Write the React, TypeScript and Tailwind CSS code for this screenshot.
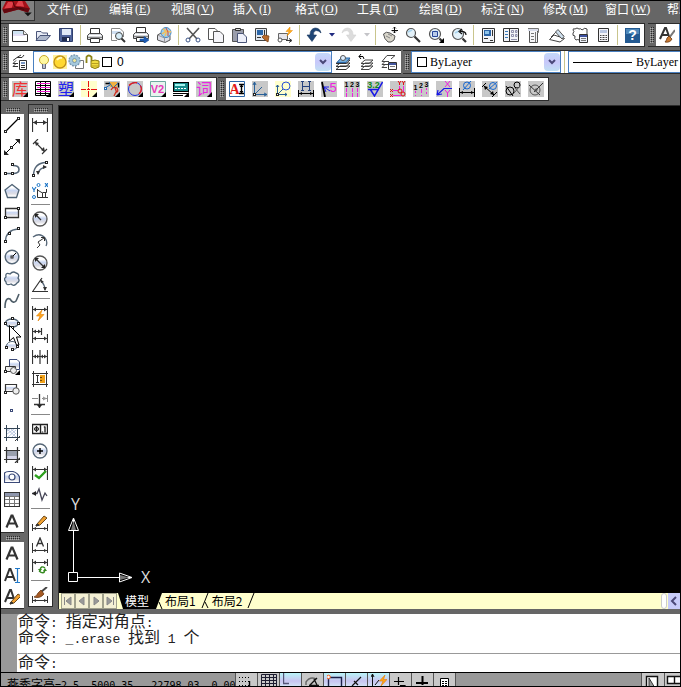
import React from "react";
import clsx from "clsx";

const SERIF = "font-['Liberation_Serif','Noto_Sans_CJK_SC',serif]";
const SANS = "font-['Noto_Sans_CJK_SC',sans-serif]";

type Tool = { name: string; icon: React.ReactNode; narrow?: boolean } | "sep";

/* ---------- drawing helpers, all icons use a 16x16 grid ---------- */

function P({ d, c = "#333", f = "none", w = 1 }: { d: string; c?: string; f?: string; w?: number }) {
  return <path d={d} stroke={c} fill={f} strokeWidth={w} />;
}

function R({ x = 0, y = 0, w = 16, h = 16, f = "#c8c8c8" }: { x?: number; y?: number; w?: number; h?: number; f?: string }) {
  return <rect x={x} y={y} width={w} height={h} fill={f} />;
}

function Node({ x, y, c = "#222" }: { x: number; y: number; c?: string }) {
  return <rect x={x - 1} y={y - 1} width={2} height={2} fill="#fff" stroke={c} />;
}

function T({ x, y, s, c, b, children }: { x: number; y: number; s: number; c: string; b?: boolean; children: React.ReactNode }) {
  return (
    <text x={x} y={y} fontSize={s} fill={c} fontWeight={b ? 700 : 400} textAnchor="middle">
      {children}
    </text>
  );
}

const Corner = () => <P d="M16 11V16H11Z" c="none" f="#000" />;

// horizontal dimension: two extension lines joined by an arrow line
function Dim({ y = 12, top = 7, c = "#333" }: { y?: number; top?: number; c?: string }) {
  return (
    <>
      <P d={`M.5 ${top}V16M15.5 ${top}V16M1 ${y}.5H15`} c={c} />
      <P d={`M1 ${y}.5L4 ${y - 1}V${y + 2}ZM15 ${y}.5L12 ${y - 1}V${y + 2}Z`} c="none" f={c} />
    </>
  );
}

function Glass({ x = 6, y = 6, r = 4.5 }: { x?: number; y?: number; r?: number }) {
  return (
    <>
      <circle cx={x} cy={y} r={r} fill="#e4f2fa" stroke="#555" strokeWidth={1.2} />
      <path d={`M${x - 3} ${y - 1}L${x + 1} ${y - 3}`} stroke="#a9d4ee" strokeWidth={1.5} />
      <path d={`M${x + r - 1} ${y + r - 1}L15 15`} stroke="#333" strokeWidth={2.2} />
    </>
  );
}

function Printer() {
  return (
    <>
      <P d="M3.5 7V1.5H12.5V7" f="#fff" />
      <P d="M.5 8.500L2.500 6.500H13.500L15.5 8.500V12.5H.5Z" f="#d6d8dc" c="#444" />
      <P d="M2 8.5H14" c="#fff" />
      <P d="M1 10.5H15" c="#888" />
      <P d="M3.5 11.5H12.5V15.5H3.5Z" f="#fff" />
    </>
  );
}

function Pencil() {
  return (
    <>
      <P d="M5 9L12 1L15 3L8 10L4 11Z" c="#6b4a1c" f="#f0a030" />
      <P d="M4 11L5 9L7 10Z" c="#333" f="#333" />
    </>
  );
}

function Bolt() {
  return <P d="M10 3L4.500 9H8L6 14L12 7.500H8.500Z" c="#e08000" f="#ffa51e" w={0.6} />;
}

function Brush() {
  return (
    <>
      <P d="M15 0L9 5" c="#444" w={2} />
      <P d="M9 3L12 7Q8 12 2 10Q5 9 6 6Z" c="#6b3a14" f="#a65a24" w={0.8} />
    </>
  );
}

const Shade = () => (
  <linearGradient id="shade" x1="0" y1="0" x2="0" y2="1">
    <stop offset="0.25" stopColor="#fff" />
    <stop offset="0.45" stopColor="#c9d6f2" />
    <stop offset="0.7" stopColor="#dcdce4" />
    <stop offset="0.9" stopColor="#fff" />
  </linearGradient>
);

/* ---------- toolbars ---------- */

const standardTools: Tool[] = [
  { name: "新建", icon: <><P d="M.5 3.500H11.500L15.500 7.500V14.500H.5Z" f="#fff" /><R x={1} y={4} w={10} h={3} f="#cfe3f2" /><R x={1} y={7} w={12} h={2} f="#e4e0f6" /><P d="M11.500 3.500V7.500H15.500" f="#eee" c="#666" /></> },
  { name: "打开", icon: <><P d="M1.500 13V4.500H6L7.500 6H12.500V8" c="#4a5578" f="#e8ecf6" /><P d="M1 13.500L5 8.500H15.500L11 13.500Z" c="#4a5578" f="#aeb8cc" /></> },
  { name: "保存", icon: <><P d="M1.500 1.500H14.500V14.500H2.500L1.500 13.500Z" c="#30406e" f="#4f639a" /><R x={4} y={2} w={9} h={6} f="#dfe8f6" /><R x={4} y={10} w={8} h={4} f="#1f2b50" /><R x={9} y={11} w={2} h={3} f="#fff" /></> },
  "sep",
  { name: "打印", icon: <Printer /> },
  { name: "打印预览", icon: <><P d="M1.500 13.500V1.500H10L13.500 5V10M1.500 13.500H7" f="#fff" c="#888" /><R x={2} y={4} w={9} h={3} f="#cfdff2" /><circle cx="9" cy="9" r="3.5" fill="#d6ecf8" stroke="#444" /><P d="M11.500 11.500L15 15" w={2} /></> },
  { name: "发布", icon: <><g transform="translate(0 -1)"><Printer /></g><P d="M7 12H11V9.500L16 13L11 16.500V14H7Z" c="#1550a0" f="#1e5cb4" w={0.6} /></> },
  { name: "三维 DWF", icon: <><P d="M1.500 8L6 5.500L14 8.500V13L9 15.500L1.500 13Z" c="#555" f="#dcdde6" /><P d="M1.500 8L8.500 11V15.500M8.500 11L14 8.500" c="#999" /><circle cx="10" cy="5.500" r="5" fill="#9ad0f2" stroke="#4b88bd" /><P d="M7 2Q12 4 9 9M6 7Q10 3 15 5" c="#f0c060" w={1.6} /><P d="M10 1Q13 5 12 9" c="#d84a3a" /></> },
  "sep",
  { name: "剪切", icon: <><P d="M2 1L12 12M14 1L4 12" c="#555" w={1.6} /><circle cx="3" cy="13" r="2" fill="none" stroke="#3b5488" /><circle cx="13" cy="13" r="2" fill="none" stroke="#3b5488" /></> },
  { name: "复制", icon: <><P d="M.5 1.500H7L9.500 4V12.500H.5Z" f="#fff" c="#555" /><P d="M5.500 4.500H12L15.500 8V15.500H5.500Z" f="#f6f6fa" c="#555" /></> },
  { name: "粘贴", icon: <><P d="M1.500 2.500H12.500V14.500H1.500Z" f="#9a9dab" c="#555" /><P d="M4.500 3.500V1.500H9.500V3.500Z" f="#ddd" /><P d="M6.500 6.500H12L15.500 10V15.500H6.500Z" f="#eef0fa" c="#4a5578" /></> },
  { name: "特性匹配", icon: <><P d="M1.500 1.500H12.500V13.500H1.500Z" f="#e0e6ee" c="#444" /><R x={3} y={3} w={6} h={5} f="#2c66a8" /><P d="M3 10.500H7M10.500 3V8" /><P d="M10 8L15 9L14 15L11 13L8 10Z" c="#7b451a" f="#b86a2c" w={0.8} /></> },
  { name: "块编辑器", icon: <><P d="M1.500 6.500H10.500V12.500H1.500Z" f="#e6e6ec" c="#666" /><circle cx="3" cy="13" r="2" fill="#fff" stroke="#555" /><P d="M9 13.500H14M12 11.500L15 13.500L12 15.500" /><P d="M13 0L9 4.500H12L10 9L15.500 3.500H13Z" c="#e88a00" f="#ffac20" w={0.5} /></> },
  "sep",
  { name: "放弃", icon: <P d="M15 6Q14 1 9 1Q4 2 4 8H1L6 14.500L10.500 8H7.500Q7 4 10 3.500Q13 3.500 15 6Z" c="#16345c" f="#1f4676" w={0.6} /> },
  { name: "放弃列表", narrow: true, icon: <P d="M5 6H11L8 9.500Z" c="none" f="#202a80" /> },
  { name: "重做", icon: <P d="M1 6Q2 1 7 1Q12 2 12 8H15L10 14.500L5.500 8H8.500Q9 4 6 3.500Q3 3.500 1 6Z" c="#d2d2d2" f="#dcdcdc" w={0.6} /> },
  { name: "重做列表", narrow: true, icon: <P d="M5 6H11L8 9.500Z" c="none" f="#c4c4c8" /> },
  "sep",
  { name: "实时平移", icon: <><P d="M1.500 7Q4 4 8 6L13 9Q13 14 9 15H6Q2 12 1.500 7Z" f="#d9d6cb" c="#555" /><P d="M4 9L8 11M6 7L10 9" c="#888" /><P d="M12.500 0V6M9.500 3.500H16" c="#111" /><P d="M11 1.500L12.500 0L14 1.500M11 4.500L12.500 6L14 4.500" c="#111" w={0.8} /></> },
  { name: "实时缩放", icon: <Glass /> },
  { name: "窗口缩放", icon: <><Glass x={7} y={7} r={5.5} /><P d="M4.500 4.500H9.500V9.500H4.500Z" c="#26479a" f="#b9cce8" /><Corner /></> },
  { name: "缩放上一个", icon: <><Glass x={7} y={7} r={5.5} /><P d="M15 8Q15 4 9 4.500M11 2L8 4.500L11 7" c="#111" w={1.2} /></> },
  "sep",
  { name: "特性", icon: <><P d="M2.500 1.500H14.500V15.500H2.500Z" f="#f2f4f8" /><R x={4} y={3} w={7} h={6} f="#2c66a8" /><R x={5} y={4} w={4} h={3} f="#8ec4ea" /><P d="M12.500 3V9M4 11.500H8M10 13.500H13" /></> },
  { name: "设计中心", icon: <><P d="M.5 1.500H15.500V14.500H.5ZM6.500 2V14" f="#f2f4f8" /><P d="M2 4.500H5M2 7.500H5M2 10.500H5" c="#3a7ab8" /><P d="M8.500 3.500H10.500V5.500H8.500ZM12.500 3.500H14V5.500H12.500ZM8.500 7.500H10.500V9.500H8.500ZM12.500 7.500H14V9.500H12.500ZM8 12.500H14" c="#779" w={0.8} /></> },
  { name: "工具选项板", icon: <><P d="M3.500 1.500H11.500V15.500H3.500Z" f="#f6f6f8" c="#555" /><R x={2} y={1} w={10} h={3} f="#d8dcea" /><P d="M2 1.500H12.500V5.500H11M5 6.500H8M5 9.500H8M5 12.500H8M9.500 5V15" c="#777" /></> },
  { name: "图纸集", icon: <><P d="M.5 12.500L5 8L15.500 11.500L11 15Z" f="#fff" c="#444" /><P d="M2 10L7 5L15 9" c="#555" /><P d="M6.500 5L9 2.500L15 9.500L13 12Z" f="#cfe0ee" c="#555" /></> },
  { name: "标记集", icon: <><P d="M1 3Q1 1 3 2Q5 0 7 2Q9 1 10 3Q13 0 15 2V6Q16 8 13 8M1 3Q3 5 1 6Q0 9 3 9Q2 12 4 13Q6 12 7 13" c="#444" /><P d="M7.500 7.500H15.500V15.500H7.500Z" f="#eef2fa" /><R x={8} y={8} w={7} h={2} f="#3c50a0" /><P d="M9 11.500H14M9 13.500H14" c="#777" /></> },
  { name: "快速计算器", icon: <><P d="M3.500 1.500H13.500V14.500H3.500Z" f="#f4f4f8" /><R x={5} y={3} w={7} h={3} f="#b8c6e2" /><P d="M5 8.500H12M5 10.500H12M5 12.500H12" c="#444" /><path d="M7 7V14M10 7V14" stroke="#f4f4f8" /></> },
  "sep",
  { name: "帮助", icon: <><R x={1} y={1} w={15} h={15} f="#235a92" /><R x={2} y={2} w={13} h={5} f="#4f88ba" /><T x={8.5} y={13} s={14} c="#fff" b>?</T></> },
];

const yanxiuTools: Tool[] = [
  { name: "图库", icon: <><R /><T x={8} y={14} s={16} c="#f03030">库</T><Corner /></> },
  { name: "表格", icon: <><R f="#fff" /><P d="M.5.5H15.500V14.500H.5ZM5.500 0V15M10.500 0V15M1 4.500H15M1 8.500H15M1 12.500H15" c="#000" /><P d="M2 2.500H15M2 6.500H15M2 10.500H15" c="#f020d0" /><Corner /></> },
  { name: "塑胶", icon: <><R /><T x={8} y={14} s={16} c="#2020f0">塑</T><Corner /></> },
  { name: "中心线", icon: <><R f="#ffffcc" /><P d="M7.500 0V6M7.500 7V9M7.500 10V16M0 8.500H5M6 8.500H9M10 8.500H16" c="#e81010" /><Corner /></> },
  { name: "标注编辑", icon: <><R /><P d="M1.500 2.500H14.500V6.500" c="#000" w={1.4} /><R x={6} y={1} w={7} h={5} f="#f0b040" /><P d="M1 7L6 4M5 1L9 7L14 2" c="#2468b0" /><Node x={1.5} y={7.5} c="#2468b0" /><P d="M7 9Q9 5 13 7Q15 11 12 11L10 15M11 7L13 12" c="#d03020" w={1.3} /><Corner /></> },
  { name: "圆", icon: <><R /><circle cx="8" cy="8" r="6.5" fill="none" stroke="#2030e0" /><P d="M2 4.500Q5 1 10 1.800M13.300 4.500Q16 9 12 13" c="#e02020" w={1.4} /><Corner /></> },
  { name: "V2", icon: <><R f="#e8f4ee" /><P d="M.5.5H15.500V15.500H.5Z" c="#70a8a0" /><T x={7.5} y={12} s={11} c="#e838b8" b>V2</T><Corner /></> },
  { name: "计算", icon: <><P d="M.5 1.500H15.500V10.500H.5Z" c="#000" f="#188c8c" w={1.2} /><R x={2} y={3} w={10} h={2} f="#a4f4ee" /><path d="M2 7.500H13" stroke="#fff" strokeDasharray="2 1" /><P d="M0 14.500H10M0 12.500H15" c="#000" /><Corner /></> },
  { name: "词库", icon: <><R /><T x={8} y={14} s={16} c="#e828e0">词</T><Corner /></> },
];

const labelTools: Tool[] = [
  { name: "文字高度", icon: <><R f="#fff" /><P d="M.5.5H15.500V15.500H.5Z" c="#2c66a8" /><g className="font-['Liberation_Serif',serif]"><T x={5.5} y={13} s={14} c="#e01818" b>A</T></g><P d="M10 3.500H15M10 12.500H15M12.500 4V12" c="#000" w={1.4} /><P d="M10.500 6L12.500 3.500L14.500 6ZM10.500 10L12.500 12.500L14.500 10Z" c="none" f="#000" /></> },
  { name: "坐标系", icon: <><R /><P d="M2.500 13V1M2.500 13.500H15M3 13L10 6M1 4L2.500 1L4 4M12 12L15 13.500L12 15" c="#286098" /><Node x={2.5} y={13.5} /></> },
  { name: "坐标对象", icon: <><R f="#ffffcc" /><P d="M2.500 13V4M2.500 13.500H12M3 13L8 8M1 6L2.500 4L4 6M10 12L12 13.500L10 15" c="#286098" /><circle cx="11" cy="5" r="4" fill="none" stroke="#2850d8" /><Node x={2.5} y={13.5} /></> },
  { name: "对齐标注", icon: <><R /><P d="M4.500 0V10M11.500 0V10M5 5.500H11M3 .5H6M10 .5H13M3 9.500H6M10 9.500H13" c="#24407c" /><Dim c="#000" top={9} /></> },
  { name: "角度引线", icon: <><R /><P d="M1 1L4 16" c="#000" w={1.8} /><P d="M3 6L9 10M3 6H8M3 6L5 11" c="#2020e8" /><T x={12} y={11} s={13} c="#f020e0">5</T></> },
  { name: "序号标注", icon: <><R /><T x={2.5} y={6} s={7} c="#000" b>1</T><T x={8} y={6} s={7} c="#000" b>2</T><T x={13.5} y={6} s={7} c="#000" b>3</T><P d="M2.500 7V11M2.500 12V16M8.500 7V11M8.500 12V16M13.500 7V11M13.500 12V16" c="#f020e0" /></> },
  { name: "粗糙度", icon: <><R /><T x={6.5} y={7} s={9} c="#108820" b>3.2</T><P d="M1 8.500H12M3 8L7.500 15L15.500 1" c="#1818e8" w={1.5} /></> },
  { name: "坐标标注", icon: <><R /><P d="M9.500 5V9M13.500 5V11M3 9.500H8M3 14.500H11" c="#f020e0" /><P d="M8 0L9.500 2L11 0M9.500 2V4M12 0L13.500 2L15 0M13.500 2V4" c="#e01010" /><P d="M0 8L3 11M3 8L0 11M0 13L3 16M3 13L0 16" c="#e01010" /><circle cx="13" cy="13" r="2" fill="none" stroke="#e01010" /><circle cx="10" cy="10" r="2" fill="none" stroke="#e01010" /></> },
  { name: "连续标注", icon: <><R /><T x={2.5} y={9} s={7} c="#000" b>1</T><T x={8} y={7} s={7} c="#000" b>2</T><T x={13.5} y={6} s={7} c="#000" b>3</T><P d="M2.500 10V12M2.500 14V15M8.500 8V12M8.500 14V15M13.500 7V9M13.500 11V13" c="#f020e0" /></> },
  { name: "引线坐标", icon: <><R /><P d="M1 14L8 7.500H16M1 14L2 9M1 14L6 13" c="#1818e8" w={1.2} /><P d="M9 0L14 6M14 0L9 6M9 9L11.500 12L14 9M11.500 12V16" c="#f020e0" /></> },
  { name: "直径线性", icon: <><R /><circle cx="8" cy="4.500" r="3.500" fill="none" stroke="#1868d0" /><P d="M4 9L12 0" c="#1868d0" /><Dim c="#000" y={11} top={7} /></> },
  { name: "直径对齐", icon: <><R /><circle cx="11" cy="5" r="3.500" fill="none" stroke="#1868d0" /><P d="M7 8L15 1" c="#1868d0" /><P d="M0 6L4 2M10 16L15 11M2 5L12 14" c="#000" /><P d="M2 5L3 9L6 6ZM12 14L11 10L8 13Z" c="none" f="#000" /></> },
  { name: "半径标注", icon: <><R /><circle cx="5" cy="10" r="4" fill="none" stroke="#000" /><P d="M1 5L8 15" c="#000" /><circle cx="12" cy="4" r="3" fill="none" stroke="#000" /><P d="M10 7L15 13M9 12L15 5" c="#555" /></> },
  { name: "直径标注", icon: <><R /><circle cx="7" cy="9" r="5" fill="none" stroke="#555" /><P d="M1 4L12 14M6 11L15 2" c="#333" /><P d="M6 11L8 7L10 9Z" c="none" f="#444" /></> },
];

const letterA = <P d="M2.500 14.500L7.500 2.500H8.500L13.500 14.500M5 10.500H11" w={2.2} />;

const drawTools: Tool[] = [
  { name: "直线", icon: <><P d="M2 14L14 2" c="#000" w={1.3} /><Node x={1.5} y={14.5} /><Node x={14.5} y={1.5} /></> },
  { name: "构造线", icon: <><P d="M2 14L14 2" c="#000" /><P d="M0 16V11L5 16ZM16 0V5L11 0Z" c="none" f="#222" /><Node x={7.5} y={8.5} /></> },
  { name: "多段线", icon: <><P d="M2 12.500H9Q15 12.500 15 8.500Q15 4.500 9 4.500" c="#567" w={1.6} /><Node x={1.5} y={12.5} /><Node x={8.5} y={12.5} /><Node x={8.5} y={3.5} /></> },
  { name: "正多边形", icon: <P d="M8 1.500L15 7L12.500 14.500H3.500L1 7Z" f="url(#shade)" c="#4e6274" w={1.3} /> },
  { name: "矩形", icon: <><P d="M1.500 3.500H14.500V12.500H1.500Z" f="url(#shade)" w={1.3} /><Node x={1.5} y={12.5} /><Node x={14.5} y={3.5} /></> },
  { name: "圆弧", icon: <><P d="M1.500 14Q2 3 14 2" c="#567" w={1.3} /><Node x={1.5} y={14.5} /><Node x={5.5} y={6.5} /><Node x={14.5} y={1.5} /></> },
  { name: "圆", icon: <><circle cx="8" cy="8" r="6.800" fill="url(#shade)" stroke="#567" strokeWidth="1.4" /><P d="M8 8L12 4" c="#000" /><Node x={8} y={8} /></> },
  { name: "修订云线", icon: <P d="M6 3Q9-.5 12 2Q16 3 14 7Q16.500 10 13 12Q10 16 7 13Q2 15 2 11Q-1 8 2 6Q1 1 6 3Z" f="url(#shade)" c="#4e6274" w={1.3} /> },
  { name: "样条曲线", icon: <P d="M1 15Q1 4 6 6Q9 11 12 8Q13 6 15 1" c="#4e5d68" w={1.6} /> },
  { name: "椭圆", icon: <><ellipse cx="8" cy="8" rx="6.500" ry="4" fill="url(#shade)" stroke="#4e6274" strokeWidth="1.300" /><Node x={8.5} y={3.5} /><Node x={1.5} y={8.5} /><Node x={14.5} y={8.5} /><Node x={8.5} y={12.5} /></> },
  { name: "椭圆弧", icon: <><P d="M2 9Q4 4 9 4.500Q15 6 14 10Q11 13 8 12.500" f="url(#shade)" c="#4e6274" /><Node x={8.5} y={12.5} /><Node x={2.5} y={10.5} /><Node x={13.5} y={9.5} /></> },
  { name: "插入块", icon: <><P d="M5.500 7V.5H13L15.500 3V10.500H12" f="url(#shade)" c="#3b4a78" /><P d="M1.500 7.500H11.500V12.500H1.500Z" f="#eee" /><circle cx="9.500" cy="11.500" r="3" fill="#eee" stroke="#555" /><Node x={1.5} y={12.5} /><Corner /></> },
  { name: "创建块", icon: <><P d="M1.500 3.500H12.500V10.500H1.500Z" f="url(#shade)" w={1.2} /><circle cx="12" cy="10" r="3.200" fill="#eee" stroke="#555" /><Node x={1.5} y={11.5} /></> },
  { name: "点", icon: <Node x={7.5} y={7.5} c="#3b4a78" /> },
  { name: "图案填充", icon: <><P d="M3 6L6 4M3 9L10 4M4 12L12 5M8 12L12 8M3 4L12 12M7 4L12 9" c="#a9bad8" w={0.8} /><P d="M2.500 0V16M13.500 0V16M0 3.500H16M0 12.500H16" c="#345" /><P d="M11 16L16 11" /></> },
  { name: "渐变色", icon: <><R x={3} y={4} w={10} h={8} f="#9aa0ae" /><R x={3} y={9} w={10} h={3} f="#d4d4e8" /><P d="M2.500 0V16M13.500 0V16M0 3.500H16M0 12.500H16M11 16L16 11" c="#333" w={1.2} /></> },
  { name: "面域", icon: <><P d="M.5 13.500V4Q2 2.500 5 2.500H9Q14 4 15.500 8V13.500Z" f="url(#shade)" c="#3b4a78" w={1.2} /><circle cx="8" cy="8" r="3" fill="#fff" stroke="#3b4a78" strokeWidth="1.200" /></> },
  { name: "表格", icon: <><P d="M.5 1.500H15.500V15.500H.5Z" f="#fff" w={1.2} /><R x={1} y={2} w={14} h={3} f="#8e96ac" /><P d="M1 5.500H15M1 8.500H15M1 12.500H15M5.500 5V15M10.500 5V15" c="#777" /></> },
  { name: "多行文字", icon: letterA },
];

const textTools: Tool[] = [
  { name: "多行文字", icon: letterA },
  { name: "单行文字", icon: <><P d="M1 14L5.500 2H6.500L11 14M3 10H9" w={2} /><P d="M11 1.500H16M11 15.500H16M13.500 2V15" c="#2078c8" w={1.2} /></> },
  { name: "编辑文字", icon: <><P d="M1 13L6 1H7L11 13M3 9H9" w={2} /><g transform="translate(2 4)"><Pencil /></g></> },
];

const dimensionTools: Tool[] = [
  { name: "线性标注", icon: <><P d="M.5 1V15M15.500 1V15M1 5.500H15" w={1.2} /><P d="M1 5.500L5 3V8ZM15 5.500L11 3V8Z" c="none" f="#333" /></> },
  { name: "对齐标注", icon: <><P d="M1 5L6 0M10 15L15 10M3 3L12 12" w={1.1} /><P d="M3 3L4 7L7 4ZM13 13L12 8L9 11Z" c="none" f="#333" /></> },
  { name: "弧长标注", icon: <><P d="M1.500 14Q2 2 14 1.500M6 13Q7 7 14 6" c="#567" w={1.4} /><P d="M6 14L4 10H8ZM15 6L11 4V8Z" c="none" f="#333" /><Node x={1.5} y={14.5} /><Node x={14.5} y={1.5} /></> },
  { name: "坐标标注", icon: <><P d="M5.500 6V14.500H16M10.500 14V10L5.500 7M10.500 9.500H14.500V6M13.500 14V10" c="#333" /><P d="M0 4L2 7L4 4M2 7V9M13 0L16 4M16 0L13 4" c="#2078c8" w={1.2} /><circle cx="6.500" cy="2" r="1.500" fill="none" stroke="#2078c8" /><circle cx="2" cy="14" r="1.500" fill="none" stroke="#2078c8" /></> },
  "sep",
  { name: "半径标注", icon: <><circle cx="8" cy="8" r="7" fill="url(#shade)" stroke="#555" strokeWidth="1.3" /><P d="M3 3L9 9" w={1.3} /><P d="M3 3H7L3 7Z" c="none" f="#222" /></> },
  { name: "折弯标注", icon: <><P d="M1 4Q8-1 13 5Q16 9 14 13" c="#567" w={1.3} /><P d="M5 15L8 12L6 9L12 5M9 4.500H12.500V8" c="#333" /></> },
  { name: "直径标注", icon: <><circle cx="8" cy="8" r="7" fill="url(#shade)" stroke="#555" strokeWidth="1.3" /><P d="M3 3L13 13" w={1.3} /><P d="M3 3H7L3 7ZM13 13H9L13 9Z" c="none" f="#222" /></> },
  { name: "角度标注", icon: <><P d="M0 14.500H16M1 14L10 1" w={1.2} /><P d="M9 4Q13 8 13 13" c="#567" w={1.3} /><P d="M8 2L12 5L9 6ZM13 14L11 10H15Z" c="none" f="#333" /></> },
  "sep",
  { name: "快速标注", icon: <><P d="M.5 1V15M15.500 1V15M1 4.500H15" w={1.2} /><P d="M1 4.500L4 2.500V6.500ZM15 4.500L12 2.500V6.500Z" c="none" f="#333" /><g transform="translate(0 2)"><Bolt /></g></> },
  { name: "基线标注", icon: <><P d="M.5 1V16M9.500 1V8M15.500 7V16M1 4.500H9M1 11.500H15" w={1.2} /><P d="M1 4.500L4 2.500V6.500ZM9 4.500L6 2.500V6.500ZM1 11.500L4 9.500V13.500ZM15 11.500L12 9.500V13.500Z" c="none" f="#333" /></> },
  { name: "连续标注", icon: <><P d="M.5 1V15M8 1V15M15.500 1V15M1 7.500H15" w={1.2} /><P d="M1 7.500L4 5.500V9.500ZM7.500 7.500L5 5.500V9.500ZM8.500 7.500L11 5.500V9.500ZM15 7.500L12 5.500V9.500Z" c="none" f="#333" /></> },
  { name: "标注间距", icon: <><P d="M0 2.500H16M0 13.500H16M1.500 0V16M14.500 0V16M5.500 4V12M4 4.500H7M4 11.500H7" /><R x={8} y={4} w={5} h={8} f="#f0a018" /><P d="M8 6.500H10M8 9.500H10" c="#704800" /></> },
  { name: "标注打断", icon: <><P d="M7.500 1V15M2 11.500H13" w={1.3} /><P d="M5 12L7.500 15L10 12Z" c="none" f="#222" /><P d="M0 5.500H6M10 5.500H16M15.500 2V9" c="#888" /><P d="M11 3.500V7.500L15 5.500Z" c="none" f="#999" /></> },
  "sep",
  { name: "公差", icon: <><P d="M.5 3.500H15.500V12.500H.5ZM8.500 3V13" w={1.4} c="#222" /><circle cx="4.500" cy="8" r="2" fill="none" stroke="#222" /><P d="M4.500 5V11M2 8H7" c="#222" /><P d="M10.500 10.500V11.500M13 5.500V11.500M12 6.500L13 5.500" c="#222" w={1.4} /></> },
  { name: "圆心标记", icon: <><circle cx="8" cy="8" r="7" fill="url(#shade)" stroke="#567" strokeWidth="1.3" /><P d="M8 5V11M5 8H11" c="#000" w={1.4} /></> },
  { name: "检验", icon: <><P d="M.5 1V15M15.500 1V15M1 4.500H15" w={1.2} /><P d="M1 4.500L4 2.500V6.500ZM15 4.500L12 2.500V6.500Z" c="none" f="#333" /><P d="M3 10L7 13L14 6" c="#2ca01c" w={2.4} /></> },
  { name: "折弯线性", icon: <><P d="M0 6.500H5L7 2L10 13L13 6L15 9" c="#445" w={1.3} /><P d="M0 6.500L4 4V9Z" c="none" f="#222" /></> },
  "sep",
  { name: "编辑标注", icon: <><Dim y={13} top={9} /><Pencil /></> },
  { name: "编辑标注文字", icon: <><Dim y={13} top={6} /><P d="M4.500 9.500L8 1L11.500 9.500M6 6.500H10" w={1.3} /></> },
  { name: "标注更新", icon: <><P d="M.5 0V13M15.500 0V7M1 3.500H15" w={1.2} /><P d="M1 3.500L4 1.500V5.500ZM15 3.500L12 1.500V5.500Z" c="none" f="#333" /><P d="M13 9Q9 6 8 11M7 12Q12 16 13 11" c="#358a20" w={1.4} /><P d="M6 10H10L8 13ZM11 12H15L13 9Z" c="none" f="#358a20" /></> },
  "sep",
  { name: "标注样式", icon: <><Dim y={13} top={9} /><Brush /></> },
];

const layerTools: Tool[] = [
  { name: "将对象的图层置为当前", icon: <><P d="M1 12.500L5 9H15L11 12.500ZM1 15.500L5 12H15L11 15.500ZM1 9.500L5 6H15L11 9.500Z" f="#fff" /><P d="M2 8.500L6 4H15L11 8.500Z" c="#2864a4" f="#70aada" /><circle cx="8" cy="4" r="2.500" fill="#ddeeff" stroke="#555" /></> },
  { name: "上一个图层", icon: <><P d="M3 9.500L7 6H15L11 9.500ZM3 12.500L7 9H15L11 12.500ZM3 15.500L7 12H15L11 15.500Z" f="#fff" c="#444" /><P d="M1 2.500H5L6 5M3 0L1 2.500L3 5" c="#000" /></> },
  { name: "图层状态管理器", icon: <><P d="M1 7.500L6 1.500H14L10 5M1 7.500H8M1 10.500L4 7.500M1 10.500H7M1 13.500L4 10.500M1 13.500H6" c="#444" /><P d="M7.500 8.500H15.500V15.500H7.500Z" f="#fff" /><R x={8} y={9} w={7} h={2} f="#4458a0" /><P d="M9 12.500H14" c="#777" /></> },
];

const menus = [
  ["文件", "F"], ["编辑", "E"], ["视图", "V"], ["插入", "I"], ["格式", "O"], ["工具", "T"],
  ["绘图", "D"], ["标注", "N"], ["修改", "M"], ["窗口", "W"], ["帮助", "H"],
];

/* status toggles, "on" ones are lit */
const statusToggles = [
  { name: "捕捉", on: false, icon: <><path d="M0 4.500H10M0 8.500H10M0 12.500H10" stroke="#000" strokeDasharray="1 2" fill="none" /><P d="M10.500 8V14" c="#000" w={1.4} /></> },
  { name: "栅格", on: false, icon: <P d="M.5 1.500H15.500V14M.5 1.500V14M.5 4.500H15M.5 7.500H15M.5 10.500H15M4.500 1V14M8.500 1V14M12.500 1V14" c="#1c1c30" /> },
  { name: "正交", on: true, icon: <P d="M.5 0V10.500H6" c="#557" w={1.4} /> },
  { name: "极轴", on: false, icon: <><P d="M1 12V9Q5 3 11 6" c="#666" w={1.4} /><P d="M5 12L12 5M4 12.500H14M9 6L12 12" c="#111" w={1.3} /></> },
  { name: "对象捕捉", on: true, icon: <><P d="M1.500 4.500H14.500V14M1.500 4V14" c="#1c2048" w={1.4} /><circle cx="1.500" cy="4" r="1.800" fill="#fff" stroke="#f06020" /></> },
  { name: "对象追踪", on: true, icon: <P d="M3 13L12 4M5 8L9 12M0 13.500H6" c="#111" w={1.2} /> },
  { name: "动态 UCS", on: true, icon: <><P d="M1.500 1V14M0 4L1.500 1L3 4M4 12L8 7" c="#111" /><g transform="translate(4 -1)"><Bolt /></g></> },
  { name: "动态输入", on: false, icon: <P d="M5.500 4V12M1 8.500H11M7 12.500H12V15" c="#000" w={1.2} /> },
  { name: "线宽", on: false, icon: <P d="M7.500 3V12M1 10H13" c="#000" w={2} /> },
  { name: "快捷特性", on: false, icon: <><P d="M3.500 5.500H11.500V15H3.500Z" c="#000" f="#fff" /><path d="M5 8.500H10M5 10.500H10M5 12.500H10" stroke="#000" strokeDasharray="2 1" /></> },
];

/* ---------- layout pieces ---------- */

function Icon({ children }: { children: React.ReactNode }) {
  return (
    <svg viewBox="0 0 16 16" className="h-4 w-4 shrink-0 font-['Liberation_Sans','Noto_Sans_CJK_SC',sans-serif]" aria-hidden="true">
      {children}
    </svg>
  );
}

function Grip({ vertical }: { vertical?: boolean }) {
  return (
    <div className={clsx("flex shrink-0 items-center justify-center bg-[#666]", vertical ? "h-full w-2" : "h-[9px] w-full")}>
      <div
        className={clsx(
          "bg-[conic-gradient(#2a2a2a_25%,#777_0_50%,#aaa_0_75%,#777_0)] bg-[length:2px_2px]",
          vertical ? "h-4 w-1" : "h-1 w-[14px]"
        )}
      />
    </div>
  );
}

function Toolbar({ tools }: { tools: Tool[] }) {
  return (
    <div className="flex h-full shrink-0 items-center">
      {tools.map((tool, i) =>
        tool === "sep" ? (
          <div key={i} className="flex h-full w-[6px] justify-start py-px pl-0.5">
            <div className="w-px bg-[#c9c58c]" />
          </div>
        ) : (
          <button
            key={i}
            type="button"
            aria-label={tool.name}
            className={clsx("flex h-full items-center overflow-hidden", tool.narrow ? "w-3 justify-center" : "w-[23px] pl-[3px]")}
          >
            <Icon>{tool.icon}</Icon>
          </button>
        )
      )}
    </div>
  );
}

function Palette({ tools }: { tools: Tool[] }) {
  return (
    <div className="flex w-[23px] flex-col bg-white outline outline-[#2c2c2c]">
      <Grip />
      {tools.map((tool, i) =>
        tool === "sep" ? (
          <div key={i} className="flex h-[6px] flex-col px-0.5 pt-0.5">
            <div className="h-px bg-[#888]" />
          </div>
        ) : (
          <button key={i} type="button" aria-label={tool.name} className="flex h-[22px] items-center pl-[3px]">
            <Icon>{tool.icon}</Icon>
          </button>
        )
      )}
    </div>
  );
}

function Bar({ className, children }: { className?: string; children: React.ReactNode }) {
  return (
    <div className={clsx("flex h-6 shrink-0 items-stretch border-y border-[#2c2c2c] bg-white", className)}>
      <Grip vertical />
      {children}
    </div>
  );
}

function DropArrow({ label }: { label: string }) {
  return (
    <button
      type="button"
      aria-label={label}
      className="flex h-[18px] w-4 shrink-0 items-center justify-center rounded-sm bg-linear-to-b from-[#c4d8fa] via-[#c8c8fa] to-[#c0e0f4]"
    >
      <Icon><P d="M5 6L8 9L11 6" c="#4a4878" w={2} /></Icon>
    </button>
  );
}

function MenuBar() {
  return (
    <nav className="flex h-[22px] shrink-0 items-start overflow-hidden">
      <button type="button" aria-label="应用程序菜单" className="h-5 w-[34px] shrink-0 border-r border-b border-[#333] bg-[#808080]">
        <svg viewBox="0 0 34 20" className="h-full w-full" aria-hidden="true">
          <path d="M1 8L5 0H25L30 8L28 12L18 9L3 13Z" fill="#a31018" />
          <path d="M3 8L7 1H13L11 7ZM15 5L18 0H22L24 6Z" fill="#e0404a" />
          <path d="M1 9L12 7L20 6L30 8L28 12L18 9L3 13Z" fill="#630810" />
          <path d="M12 0L14 6L24 9" stroke="#4a0408" fill="none" />
          <path d="M24 12H32L28 16Z" fill="#111" />
        </svg>
      </button>
      <div className="ml-3 flex min-w-0 flex-1">
        {menus.map(([title, key]) => (
          <button key={key} type="button" className={clsx("flex w-[62px] shrink-0 items-center text-xs leading-4 text-white", SANS)}>
            {title}
            <span className={clsx("ml-0.5", SERIF)}>
              (<span className="underline">{key}</span>)
            </span>
          </button>
        ))}
      </div>
    </nav>
  );
}

function LayerRow() {
  return (
    <div className="mt-[3px] flex shrink-0 overflow-hidden">
      <Bar>
        <button type="button" aria-label="图层特性管理器" className="flex w-6 items-center pl-[3px]">
          <Icon>
            <P d="M1 6.500L5 3.500H10L12 1M1 9.500L4 6.500M1 9.500H6M1 12.500L4 9.500M1 12.500H6M5 3.500L9 1" c="#333" />
            <P d="M7.500 6.500H14.500V15.500H7.500Z" f="#fff" />
            <R x={9} y={8} w={4} h={2} f="#7a98c4" />
            <P d="M9 11.500H13M9 13.500H13" />
          </Icon>
        </button>
        <div className="flex w-[299px] items-center border border-[#4a80c0] pl-0.5">
          <div className="flex">
            <Icon>
              <circle cx="8" cy="6" r="4.500" fill="#fff8a0" stroke="#c8a828" />
              <P d="M6.500 10V14.500H9.500V10" c="#667" f="#b8c0cc" />
            </Icon>
            <Icon>
              <R x={1} y={1} w={14} h={14} f="#fff098" />
              <circle cx="8" cy="8" r="6" fill="#ffd830" stroke="#c09018" strokeWidth={1.3} />
              <P d="M5 6Q7 3 10 4" c="#fff8c8" w={2} />
            </Icon>
            <Icon>
              <P d="M7.500 6.500H15.500V14.500H7.500Z" c="#777" f="#fff" />
              <circle cx="6.500" cy="6.500" r="5.500" fill="#a4c8dc" stroke="#7898b0" strokeWidth={1.3} strokeDasharray="2 1" />
              <circle cx="6.500" cy="6.500" r="2" fill="#f0e898" stroke="#7898b0" />
            </Icon>
            <Icon>
              <P d="M2.500 9V3Q4.500 0 7.500 3V7" c="#8c8418" w={1.8} />
              <P d="M7 7Q11 5 15 7V13Q11 16 7 13Z" c="#8c7c10" f="#f0dc40" />
              <P d="M7 9.500H15M7 12H15" c="#b8a020" />
            </Icon>
          </div>
          <span className="ml-0.5 h-[10px] w-[10px] border border-black bg-white" />
          <input aria-label="图层" defaultValue="0" className="ml-[5px] min-w-0 flex-1 font-['Liberation_Sans',sans-serif] text-xs text-black outline-none" />
          <DropArrow label="图层列表" />
        </div>
        <Toolbar tools={layerTools} />
      </Bar>
      <Bar className="ml-0.5 min-w-0 flex-1">
        <div className="flex w-[150px] shrink-0 items-center border border-[#4a80c0] pl-[5px]">
          <span className="h-[10px] w-[10px] shrink-0 border border-black bg-white" />
          <input aria-label="颜色" defaultValue="ByLayer" className={clsx("ml-[3px] min-w-0 flex-1 text-xs text-black outline-none", SERIF)} />
          <DropArrow label="颜色列表" />
        </div>
        <div className="mx-[3px] w-px shrink-0 bg-[#c9c58c]" />
        <button type="button" aria-label="线型" className={clsx("flex min-w-0 flex-1 items-center gap-1 border border-r-0 border-[#4a80c0] pr-0.5 pl-1 text-xs text-black", SERIF)}>
          <span className="h-px flex-1 bg-black" />
          ByLayer
        </button>
      </Bar>
    </div>
  );
}

function UcsIcon() {
  return (
    <svg viewBox="0 0 90 90" className="absolute bottom-2 left-1.5 h-[90px] w-[90px]" role="img" aria-label="UCS">
      <g fill="none" stroke="#fff">
        <path d="M3.500 77.500H12.500V86.500H3.500Z" />
        <path d="M8.500 77V24M13 82.500H66" />
        <path d="M3.500 35.500L8.500 23L13.500 35.500ZM54.500 78L67 82.500L54.500 87Z" />
      </g>
      <path d="M6 35L8.500 26L11 35ZM55 80L64 82.500L55 85Z" fill="#777" />
      <g className="font-['Open_Sans',sans-serif]">
        <T x={10.5} y={15} s={16} c="#ddd">Y</T>
        <T x={80.5} y={88} s={16} c="#ddd">X</T>
      </g>
    </svg>
  );
}

function LayoutTabs() {
  const arrows = ["M4.500 4V12M11 4L6 8L11 12Z", "M10 4L5 8L10 12Z", "M6 4L11 8L6 12Z", "M5 4L10 8L5 12ZM11.500 4V12"];
  return (
    <div className={clsx("flex h-4 shrink-0 items-stretch bg-[#ffffcc] pl-0.5 text-xs leading-4", SANS)}>
      {arrows.map((d, i) => (
        <button key={d} type="button" aria-label={["第一个", "上一个", "下一个", "最后一个"][i]} className="flex w-[14px] items-center justify-center overflow-hidden border border-[#a0a08c] bg-[#f4f0d4]">
          <Icon><P d={d} c="#888" f="#999" /></Icon>
        </button>
      ))}
      <svg viewBox="0 0 8 16" className="h-4 w-2" aria-hidden="true"><path d="M1 0H8V16H6Z" fill="#000" /></svg>
      <button type="button" className="bg-black text-white">模型</button>
      <svg viewBox="0 0 16 16" className="h-4 w-4" aria-hidden="true">
        <path d="M0 0H13L7 16H0Z" fill="#000" />
        <path d="M10 9L13 16" stroke="#000" />
      </svg>
      <button type="button" className="text-black">布局1</button>
      <svg viewBox="0 0 16 16" className="h-4 w-4" aria-hidden="true"><path d="M12 0L6 15M9 9L12 15" stroke="#000" fill="none" /></svg>
      <button type="button" className="text-black">布局2</button>
      <svg viewBox="0 0 16 16" className="h-4 w-4" aria-hidden="true"><path d="M12 0L6 15" stroke="#000" fill="none" /></svg>
      <div className="flex-1" />
      <div className="w-[6px] rounded-sm border border-[#ccc] bg-white" />
      <button type="button" aria-label="向左滚动" className="ml-px flex w-3 items-center justify-center overflow-hidden bg-[#c8ccfa]">
        <Icon><P d="M10 4L6 8L10 12" c="#4a4878" w={2} /></Icon>
      </button>
    </div>
  );
}

function Latin({ children }: { children: React.ReactNode }) {
  return <span className="font-['Liberation_Mono',monospace] text-[13px]">{children}</span>;
}

function CommandWindow() {
  return (
    <section className="mt-[5px] flex h-[58px] shrink-0 bg-[#999]">
      <div className="w-4 pt-1 pl-px">
        <div className="h-1 w-3 bg-[radial-gradient(#333_30%,#999_50%)] bg-[length:2px_2px]" />
      </div>
      <div className={clsx("flex flex-1 flex-col rounded-tl bg-white pl-px text-base leading-[13px] text-[#222]", SANS)}>
        <p className="h-4 whitespace-pre">命令<Latin>{": "}</Latin>指定对角点<Latin>:</Latin></p>
        <p className="h-4 whitespace-pre">命令<Latin>{": _.erase "}</Latin>找到<Latin>{" 1 "}</Latin>个</p>
        <div className="mt-[7px] flex h-[19px] border-t border-[#999]">
          <label htmlFor="command" className="pt-px whitespace-pre">命令<Latin>:</Latin></label>
          <input id="command" className="ml-2 h-4 min-w-0 flex-1 outline-none" />
        </div>
      </div>
    </section>
  );
}

function StatusBar() {
  return (
    <footer className="flex h-[14px] shrink-0 items-start overflow-hidden border-t border-black bg-[#999]">
      <div className={clsx("flex w-[234px] shrink-0 items-baseline pt-[3px] pl-1.5 text-xs leading-4 whitespace-pre text-black", SANS)}>
        燕秀字高
        <span className="font-['DejaVu_Sans_Mono',monospace] text-[10px]">=2.5, 5000.35, -22798.03, 0.00</span>
      </div>
      {statusToggles.map((toggle) => (
        <button
          key={toggle.name}
          type="button"
          aria-label={toggle.name}
          aria-pressed={toggle.on}
          className={clsx(
            "flex h-4 w-[22px] shrink-0 border-l border-[#555] pl-[3px]",
            toggle.on ? "bg-linear-to-b from-[#b8f4f8] via-[#c8c4f0] to-[#d8f4f8]" : "bg-[#c8c8c8]"
          )}
        >
          <Icon>{toggle.icon}</Icon>
        </button>
      ))}
      <div className="h-full flex-1 border-l border-[#555]" />
      <button type="button" aria-label="模型空间" className="flex h-4 w-[23px] border-l border-[#555] bg-[#c8c8c8] pl-[3px]">
        <Icon><P d="M1.500 3.500H12.500V16H1.500Z" f="#fff" c="#111" w={1.4} /><P d="M4 5V15L10 15Z" c="#333" f="#999" /></Icon>
      </button>
      <button type="button" aria-label="快速查看布局" className="flex h-4 w-4 overflow-hidden border-l border-[#555] bg-[#c8c8c8]">
        <Icon><P d="M2.500 3.500H9.500V10.500H2.500ZM9.500 3.500H16.500V10.500H9.500Z" f="#fff" c="#111" w={1.4} /></Icon>
      </button>
    </footer>
  );
}

export default function App() {
  return (
    <div className="relative flex h-screen w-full flex-col overflow-hidden border border-black bg-[#666]">
      <svg className="absolute h-0 w-0" aria-hidden="true">
        <defs><Shade /></defs>
      </svg>

      <MenuBar />

      <div className="flex shrink-0 gap-[3px] overflow-hidden">
        <Bar className="border-r">
          <Toolbar tools={standardTools} />
        </Bar>
        <Bar className="min-w-0 flex-1">
          <Toolbar tools={[{ name: "文字样式", icon: <><P d="M1 12L6 1H7L11 12M3 8H9" w={2} /><P d="M16 3L10 11" c="#777" w={2} /><P d="M10 9L13 12Q11 16 6 15Q8 13 8 11Z" c="#6b3a14" f="#c87830" w={0.8} /></> }]} />
          <div className="flex-1 border-l border-[#4a80c0]" />
        </Bar>
      </div>

      <LayerRow />

      <div className="mt-[3px] flex shrink-0 gap-px overflow-hidden">
        <Bar className="border-r">
          <Toolbar tools={yanxiuTools} />
        </Bar>
        <Bar className="border-r">
          <Toolbar tools={labelTools} />
        </Bar>
      </div>

      <div className="mt-1 flex min-h-0 flex-1">
        <div className="flex shrink-0 flex-col gap-px overflow-hidden">
          <Palette tools={drawTools} />
          <Palette tools={textTools} />
        </div>
        <div className="ml-[5px] shrink-0">
          <Palette tools={dimensionTools} />
        </div>
        <div className="ml-[6px] flex min-w-0 flex-1 flex-col border-t border-l border-[#2c2c2c]">
          <main className="relative min-h-0 flex-1 bg-black">
            <UcsIcon />
          </main>
          <LayoutTabs />
        </div>
      </div>

      <CommandWindow />
      <StatusBar />

      {/* mouse pointer */}
      <svg viewBox="0 0 13 22" className="pointer-events-none absolute top-[324px] left-2 h-[22px] w-[13px]" aria-hidden="true">
        <path d="M.5.500V16L4.500 12.500L7.500 20H10L7.500 12H12Z" fill="#fff" stroke="#000" />
      </svg>
    </div>
  );
}
